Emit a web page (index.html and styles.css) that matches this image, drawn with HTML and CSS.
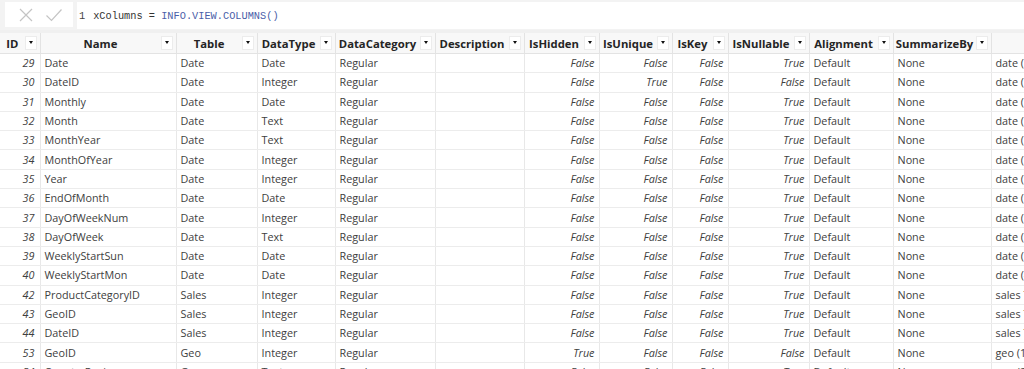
FILE: index.html
```html
<!DOCTYPE html>
<html>
<head>
<meta charset="utf-8">
<link rel="stylesheet" href="styles.css">
</head>
<body>
<div class="formula-bar">
  <div class="fb-buttons">
    <svg class="fb-icon" width="16" height="16" viewBox="0 0 16 16"><path d="M2 2 L14 14 M14 2 L2 14" stroke="#c4c4c4" stroke-width="1.2" fill="none"/></svg>
    <svg class="fb-icon" width="18" height="16" viewBox="0 0 18 16"><path d="M1.5 8.5 L6.5 13.5 L16.5 2.5" stroke="#c4c4c4" stroke-width="1.2" fill="none"/></svg>
  </div>
  <div class="fb-code"><span class="ln">1</span><span class="var">xColumns =</span> <span class="fn">INFO.VIEW.COLUMNS()</span></div>
</div>
<table class="grid">
  <colgroup>
    <col style="width:40px"><col style="width:136px"><col style="width:81px"><col style="width:78px"><col style="width:100px"><col style="width:89px"><col style="width:75px"><col style="width:73px"><col style="width:56px"><col style="width:81px"><col style="width:84px"><col style="width:98px"><col style="width:60px">
  </colgroup>
  <thead>
    <tr>
      <th><div class="hc"><span class="ht">ID</span><span class="dd"></span></div></th>
      <th><div class="hc"><span class="ht">Name</span><span class="dd"></span></div></th>
      <th><div class="hc"><span class="ht">Table</span><span class="dd"></span></div></th>
      <th><div class="hc"><span class="ht">DataType</span><span class="dd"></span></div></th>
      <th><div class="hc"><span class="ht">DataCategory</span><span class="dd"></span></div></th>
      <th><div class="hc"><span class="ht">Description</span><span class="dd"></span></div></th>
      <th><div class="hc"><span class="ht">IsHidden</span><span class="dd"></span></div></th>
      <th><div class="hc"><span class="ht">IsUnique</span><span class="dd"></span></div></th>
      <th><div class="hc"><span class="ht">IsKey</span><span class="dd"></span></div></th>
      <th><div class="hc"><span class="ht">IsNullable</span><span class="dd"></span></div></th>
      <th><div class="hc"><span class="ht">Alignment</span><span class="dd"></span></div></th>
      <th><div class="hc"><span class="ht">SummarizeBy</span><span class="dd"></span></div></th>
      <th></th>
    </tr>
  </thead>
  <tbody>
    <tr><td class="num">29</td><td>Date</td><td>Date</td><td>Date</td><td>Regular</td><td></td><td class="b">False</td><td class="b">False</td><td class="b">False</td><td class="b">True</td><td>Default</td><td>None</td><td>date (29)</td></tr>
    <tr><td class="num">30</td><td>DateID</td><td>Date</td><td>Integer</td><td>Regular</td><td></td><td class="b">False</td><td class="b">True</td><td class="b">False</td><td class="b">False</td><td>Default</td><td>None</td><td>date (30)</td></tr>
    <tr><td class="num">31</td><td>Monthly</td><td>Date</td><td>Date</td><td>Regular</td><td></td><td class="b">False</td><td class="b">False</td><td class="b">False</td><td class="b">True</td><td>Default</td><td>None</td><td>date (31)</td></tr>
    <tr><td class="num">32</td><td>Month</td><td>Date</td><td>Text</td><td>Regular</td><td></td><td class="b">False</td><td class="b">False</td><td class="b">False</td><td class="b">True</td><td>Default</td><td>None</td><td>date (32)</td></tr>
    <tr><td class="num">33</td><td>MonthYear</td><td>Date</td><td>Text</td><td>Regular</td><td></td><td class="b">False</td><td class="b">False</td><td class="b">False</td><td class="b">True</td><td>Default</td><td>None</td><td>date (33)</td></tr>
    <tr><td class="num">34</td><td>MonthOfYear</td><td>Date</td><td>Integer</td><td>Regular</td><td></td><td class="b">False</td><td class="b">False</td><td class="b">False</td><td class="b">True</td><td>Default</td><td>None</td><td>date (34)</td></tr>
    <tr><td class="num">35</td><td>Year</td><td>Date</td><td>Integer</td><td>Regular</td><td></td><td class="b">False</td><td class="b">False</td><td class="b">False</td><td class="b">True</td><td>Default</td><td>None</td><td>date (35)</td></tr>
    <tr><td class="num">36</td><td>EndOfMonth</td><td>Date</td><td>Date</td><td>Regular</td><td></td><td class="b">False</td><td class="b">False</td><td class="b">False</td><td class="b">True</td><td>Default</td><td>None</td><td>date (36)</td></tr>
    <tr><td class="num">37</td><td>DayOfWeekNum</td><td>Date</td><td>Integer</td><td>Regular</td><td></td><td class="b">False</td><td class="b">False</td><td class="b">False</td><td class="b">True</td><td>Default</td><td>None</td><td>date (37)</td></tr>
    <tr><td class="num">38</td><td>DayOfWeek</td><td>Date</td><td>Text</td><td>Regular</td><td></td><td class="b">False</td><td class="b">False</td><td class="b">False</td><td class="b">True</td><td>Default</td><td>None</td><td>date (38)</td></tr>
    <tr><td class="num">39</td><td>WeeklyStartSun</td><td>Date</td><td>Date</td><td>Regular</td><td></td><td class="b">False</td><td class="b">False</td><td class="b">False</td><td class="b">True</td><td>Default</td><td>None</td><td>date (39)</td></tr>
    <tr><td class="num">40</td><td>WeeklyStartMon</td><td>Date</td><td>Date</td><td>Regular</td><td></td><td class="b">False</td><td class="b">False</td><td class="b">False</td><td class="b">True</td><td>Default</td><td>None</td><td>date (40)</td></tr>
    <tr><td class="num">42</td><td>ProductCategoryID</td><td>Sales</td><td>Integer</td><td>Regular</td><td></td><td class="b">False</td><td class="b">False</td><td class="b">False</td><td class="b">True</td><td>Default</td><td>None</td><td>sales Table (42)</td></tr>
    <tr><td class="num">43</td><td>GeoID</td><td>Sales</td><td>Integer</td><td>Regular</td><td></td><td class="b">False</td><td class="b">False</td><td class="b">False</td><td class="b">True</td><td>Default</td><td>None</td><td>sales Table (43)</td></tr>
    <tr><td class="num">44</td><td>DateID</td><td>Sales</td><td>Integer</td><td>Regular</td><td></td><td class="b">False</td><td class="b">False</td><td class="b">False</td><td class="b">True</td><td>Default</td><td>None</td><td>sales Table (44)</td></tr>
    <tr><td class="num">53</td><td>GeoID</td><td>Geo</td><td>Integer</td><td>Regular</td><td></td><td class="b">True</td><td class="b">False</td><td class="b">False</td><td class="b">False</td><td>Default</td><td>None</td><td>geo (1)</td></tr>
    <tr><td class="num">54</td><td>CountryRegion</td><td>Geo</td><td>Text</td><td>Regular</td><td></td><td class="b">False</td><td class="b">False</td><td class="b">False</td><td class="b">True</td><td>Default</td><td>None</td><td>geo (2)</td></tr>
  </tbody>
</table>
</body>
</html>
```
FILE: styles.css
```css
html, body {
  margin: 0;
  padding: 0;
  background: #ffffff;
  overflow: hidden;
  height: 369px;
}
body {
  font-family: "Open Sans", "Noto Sans", "Liberation Sans", sans-serif;
  color: #333333;
}
.formula-bar {
  display: flex;
  gap: 4px;
  padding: 2px 0 0 5px;
  box-sizing: border-box;
  background: #f3f3f3;
  border-bottom: 3px solid #f0f0f0;
  height: 33px;
}
.fb-buttons {
  width: 68px;
  height: 25px;
  background: #ffffff;
  display: flex;
  align-items: center;
  gap: 11px;
  padding-left: 13px;
  box-sizing: border-box;
}
.fb-icon { display: block; }
.fb-code {
  flex: 1;
  height: 27px;
  background: #ffffff;
  font-family: "Liberation Mono", "DejaVu Sans Mono", monospace;
  font-size: 10.3px;
  line-height: 28px;
  padding-left: 2px;
  white-space: pre;
  color: #3a3a3a;
}
.fb-code .ln { color: #444; margin-right: 8px; }
.fb-code .var { color: #333; }
.fb-code .fn { color: #4a5ea8; }

.grid {
  border-collapse: collapse;
  table-layout: fixed;
  width: 1051px;
  font-size: 10.8px;
}
.grid th {
  height: 20px;
  padding: 0;
  background: #f8f8f8;
  border-right: 1px solid #e3e3e3;
  border-bottom: 1px solid #e3e3e3;
  font-weight: 700;
  color: #252525;
  font-size: 11.3px;
}
.hc {
  display: flex;
  align-items: center;
  height: 20px;
}
.ht {
  flex: 1;
  text-align: center;
  white-space: nowrap;
  overflow: hidden;
}
.dd {
  width: 12px;
  height: 14px;
  margin-right: 3px;
  background: #ffffff;
  border: 1px solid #ececec;
  box-sizing: border-box;
  position: relative;
  flex: none;
}
.dd::after {
  content: "";
  position: absolute;
  left: 3px;
  top: 4px;
  border-left: 2.5px solid transparent;
  border-right: 2.5px solid transparent;
  border-top: 3.5px solid #111;
}
.grid td {
  height: 19.3px;
  padding: 0 4px;
  border-right: 1px solid #e8e8e8;
  border-bottom: 1px solid #ececec;
  white-space: nowrap;
  overflow: hidden;
  color: #404040;
  line-height: 18px;
  box-sizing: border-box;
}
.grid td.num {
  text-align: right;
  font-style: italic;
  padding-right: 5px;
}
.grid td.b {
  text-align: right;
  font-style: italic;
}
```
